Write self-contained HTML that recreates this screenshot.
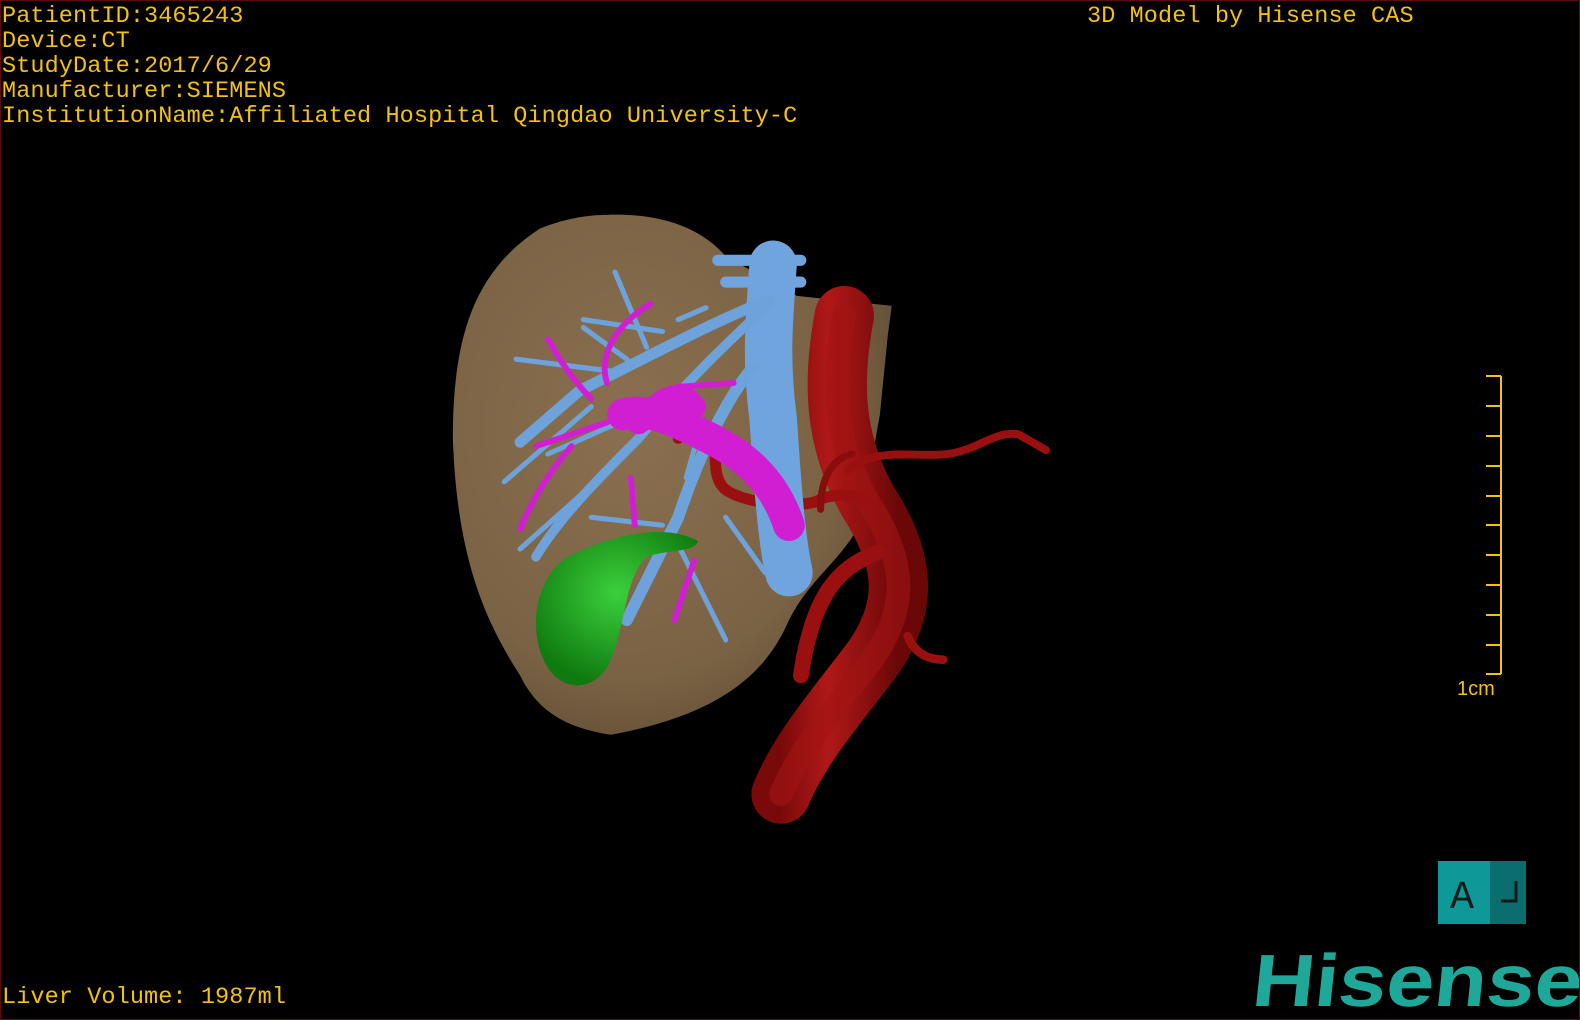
<!DOCTYPE html>
<html><head><meta charset="utf-8"><style>
html,body{margin:0;padding:0;background:#000;}
#w{position:relative;width:1580px;height:1020px;background:#000;overflow:hidden;box-sizing:border-box;border:1px solid #5a0c0c;}
.t{position:absolute;color:#f4c20d;font-family:"Liberation Mono",monospace;font-size:23.5px;line-height:25px;white-space:pre;letter-spacing:0.1px;}
svg{position:absolute;left:0;top:0;}
</style></head><body><div id="w">
<svg width="1580" height="1020" viewBox="0 0 1580 1020">
<defs>
<radialGradient id="lv" cx="0.4" cy="0.4" r="0.7"><stop offset="0" stop-color="#8a7050"/><stop offset="0.7" stop-color="#7a6244"/><stop offset="1" stop-color="#5e4a32"/></radialGradient>
<linearGradient id="ao" x1="0" x2="1"><stop offset="0" stop-color="#7a0a0a"/><stop offset="0.4" stop-color="#b01818"/><stop offset="1" stop-color="#6a0808"/></linearGradient>
<radialGradient id="gb" cx="0.5" cy="0.4" r="0.6"><stop offset="0" stop-color="#3cd03c"/><stop offset="1" stop-color="#0f7a0f"/></radialGradient>
</defs>
<g transform="translate(440 200) scale(0.3954)">
<path d="M420,35 C560,30 660,70 720,140 L900,240 L1140,265 L1130,340 L1110,540 L1060,820 C1000,920 930,960 880,1060 C820,1200 700,1300 430,1350 C300,1330 240,1280 200,1200 C110,1060 40,900 30,600 C30,350 80,180 250,70 C310,45 370,35 420,35Z" fill="url(#lv)"/>
<g fill="none" stroke-linecap="round">
<path d="M1020,290 C990,450 990,600 1080,760 C1170,900 1190,1020 1090,1160 C1000,1280 910,1380 860,1500" stroke="url(#ao)" stroke-width="150"/>
<path d="M1020,290 C990,450 990,600 1080,760 C1170,900 1190,1020 1090,1160 C1000,1280 910,1380 860,1500" stroke="#a31414" stroke-width="60" opacity="0.6"/>
<path d="M1100,890 C1000,930 940,1000 910,1200" stroke="#9a1010" stroke-width="40"/>
<path d="M1180,1100 C1200,1150 1240,1160 1270,1160" stroke="#9a1010" stroke-width="22"/>
<path d="M1080,760 C1040,740 980,740 950,760 C880,780 760,760 720,730 C680,700 700,620 690,580 C670,560 620,560 600,600" stroke="#9a1010" stroke-width="28"/>
<path d="M1030,680 C1100,620 1200,650 1280,640 C1360,630 1400,580 1460,590 L1530,630" stroke="#9a1010" stroke-width="20"/>
<path d="M960,780 C960,700 990,650 1040,640" stroke="#8a0d0d" stroke-width="18"/>
<path d="M840,160 C830,300 820,400 840,550 C850,700 860,850 880,940" stroke="#6fa4de" stroke-width="120"/>
<path d="M700,150 L910,150 M720,205 L910,205" stroke="#6fa4de" stroke-width="28"/>
<path d="M830,250 C700,300 550,380 350,480 L200,610" stroke="#6ea2da" stroke-width="28"/>
<path d="M830,260 C700,380 600,480 500,600 C400,700 300,800 240,900" stroke="#6ea2da" stroke-width="24"/>
<path d="M790,420 C720,500 650,650 600,800 C550,900 500,1000 470,1060" stroke="#6ea2da" stroke-width="30"/>
<path d="M520,370 L440,180 M560,330 L360,300 M430,430 L190,400 M380,520 L160,710 M450,560 L270,640 M380,720 L200,880 M590,850 L720,1110 M560,820 L380,800 M620,700 L660,560 M720,800 L820,940 M470,400 L360,320 M600,300 L670,270" stroke="#6ea2da" stroke-width="13"/>
<path d="M460,540 C520,520 600,560 680,600 C760,640 840,700 880,820" stroke="#d21ed2" stroke-width="80"/>
<path d="M500,560 C560,500 600,470 640,520" stroke="#d21ed2" stroke-width="60"/>
<path d="M420,460 C400,400 430,320 530,260 M380,500 C330,450 300,400 270,350 M420,560 L240,620 M330,620 C260,700 220,780 200,830 M480,700 L490,820 M640,910 L590,1060 M500,540 L600,470 L740,460" stroke="#d21ed2" stroke-width="15"/>
<path d="M650,860 C560,810 420,850 320,900 C230,960 220,1100 270,1180 C310,1240 380,1240 420,1180 C470,1080 460,960 520,900 C580,880 640,890 650,860Z" fill="url(#gb)"/>
</g>
</g>
<g stroke="#f4c20d" stroke-width="2">
<line x1="1500" y1="375" x2="1500" y2="673"/>
<line x1="1485" y1="375" x2="1500" y2="375"/><line x1="1485" y1="405" x2="1500" y2="405"/><line x1="1485" y1="435" x2="1500" y2="435"/><line x1="1485" y1="465" x2="1500" y2="465"/><line x1="1485" y1="495" x2="1500" y2="495"/><line x1="1485" y1="524" x2="1500" y2="524"/><line x1="1485" y1="554" x2="1500" y2="554"/><line x1="1485" y1="584" x2="1500" y2="584"/><line x1="1485" y1="614" x2="1500" y2="614"/><line x1="1485" y1="644" x2="1500" y2="644"/><line x1="1485" y1="673" x2="1500" y2="673"/>
</g>
<text x="1456" y="694" fill="#f4c20d" font-family="Liberation Sans, sans-serif" font-size="20">1cm</text>
<rect x="1437" y="860" width="52" height="63" fill="#0f9898"/>
<rect x="1489" y="860" width="36" height="63" fill="#0a6e6e"/>
<text x="1449" y="907" fill="#0a1a1a" font-family="Liberation Mono, monospace" font-size="40">A</text>
<path d="M1500,900 L1515,900 L1515,880" stroke="#0a1a1a" stroke-width="3" fill="none"/>
<text x="1250" y="1005" fill="#1fa89a" font-family="Liberation Sans, sans-serif" font-size="74" font-weight="bold" textLength="330" lengthAdjust="spacingAndGlyphs" transform="skewX(-6) translate(105 0)">Hisense</text>
</svg>
<div class="t" style="left:1px;top:3px">PatientID:3465243
Device:CT
StudyDate:2017/6/29
Manufacturer:SIEMENS
InstitutionName:Affiliated Hospital Qingdao University-C</div>
<div class="t" style="left:1086px;top:3px">3D Model by Hisense CAS</div>
<div class="t" style="left:1px;top:984px">Liver Volume: 1987ml</div>
</div></body></html>
